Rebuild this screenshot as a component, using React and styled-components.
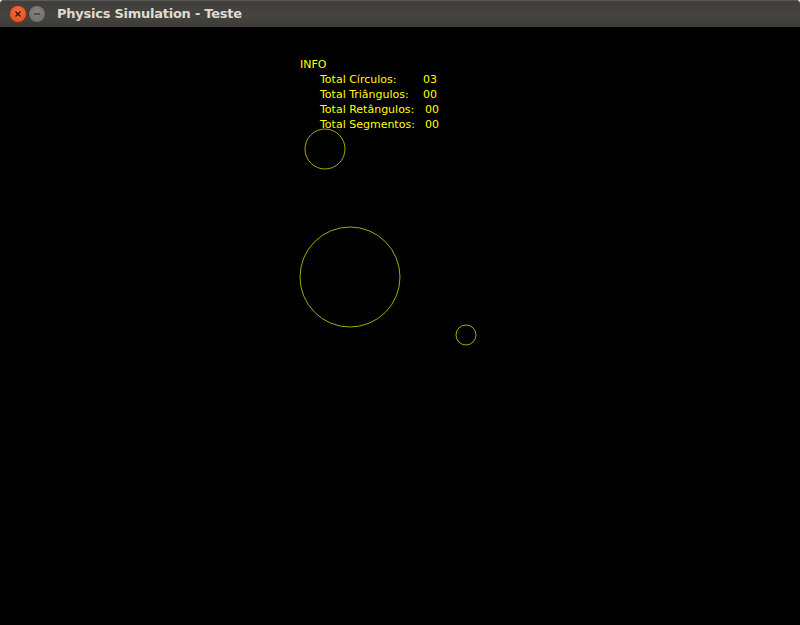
import styled, { createGlobalStyle } from 'styled-components'

const GlobalStyle = createGlobalStyle`
	html, body {
		margin: 0;
		padding: 0;
		background: #ffffff;
	}
	#root {
		width: 800px;
		height: 625px;
	}
`

const circles = [
	{ id: 1, cx: 325, cy: 122, r: 20 },
	{ id: 2, cx: 350, cy: 250, r: 50 },
	{ id: 3, cx: 466, cy: 308, r: 10 },
]

const rows = [
	{ label: 'Total Círculos:', value: '03', gap: 0 },
	{ label: 'Total Triângulos:', value: '00', gap: 0 },
	{ label: 'Total Retângulos:', value: '00', gap: 2 },
	{ label: 'Total Segmentos:', value: '00', gap: 2 },
]

const Window = styled.div`
	width: 800px;
	height: 625px;
	display: flex;
	flex-direction: column;
	overflow: hidden;
`

const TitleBar = styled.div`
	height: 27px;
	flex: none;
	display: flex;
	align-items: center;
	padding-left: 10px;
	gap: 3px;
	border-radius: 4px 4px 0 0;
	background: linear-gradient(#3f3e3a, #454440 60%, #3c3b37);
	box-shadow: inset 0 1px 0 #5a5954;
`

const WinButton = styled.div`
	width: 16px;
	height: 16px;
	border-radius: 50%;
	display: flex;
	align-items: center;
	justify-content: center;
	background: ${(p) =>
		p.$close ? 'radial-gradient(circle at 50% 40%, #f4733f, #e0461b)' : 'radial-gradient(circle at 50% 40%, #85847f, #6a6964)'};
	box-shadow: 0 0 0 1px ${(p) => (p.$close ? '#8f2d10' : '#3a3935')};
`

const Title = styled.span`
	margin-left: 9px;
	font-family: 'DejaVu Sans', sans-serif;
	font-weight: bold;
	font-size: 13px;
	color: #dfdbd2;
	letter-spacing: -0.25px;
`

const Canvas = styled.div`
	position: relative;
	flex: 1;
	background: #000000;
	padding: 30px 0 0 300px;
	font-family: 'DejaVu Sans', sans-serif;
	font-size: 11px;
	color: #ffff00;
`

const Drawing = styled.svg`
	position: absolute;
	inset: 0;
	pointer-events: none;
`

const Info = styled.div`
	display: flex;
	flex-direction: column;
	line-height: 15px;
`

const InfoRow = styled.div`
	display: flex;
	padding-left: 20px;
	white-space: pre;
`

const Label = styled.span`
	width: ${(p) => 103 + p.$gap}px;
`

const App = () => {
	return (
		<Window>
			<GlobalStyle />
			<TitleBar>
				<WinButton $close>
					<svg width='8' height='8' viewBox='0 0 8 8'>
						<path d='M1.5 1.5 L6.5 6.5 M6.5 1.5 L1.5 6.5' stroke='#3b1106' strokeWidth='1.4' />
					</svg>
				</WinButton>
				<WinButton>
					<svg width='8' height='8' viewBox='0 0 8 8'>
						<path d='M1 4 H7' stroke='#3a3935' strokeWidth='1.4' />
					</svg>
				</WinButton>
				<Title>Physics Simulation - Teste</Title>
			</TitleBar>
			<Canvas>
				<Drawing width='800' height='598'>
					{circles.map((c) => (
						<circle key={c.id} cx={c.cx} cy={c.cy} r={c.r} fill='none' stroke='#a8a800' strokeWidth='1' />
					))}
				</Drawing>
				<Info>
					<span>INFO</span>
					{rows.map((row) => (
						<InfoRow key={row.label}>
							<Label $gap={row.gap}>{row.label}</Label>
							<span>{row.value}</span>
						</InfoRow>
					))}
				</Info>
			</Canvas>
		</Window>
	)
}

export default App
